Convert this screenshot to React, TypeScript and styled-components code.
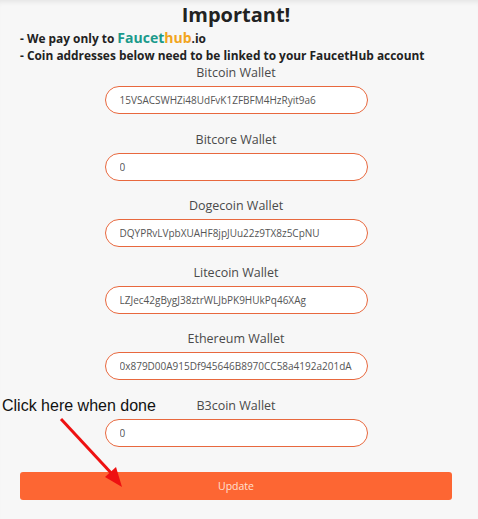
import styled, { createGlobalStyle } from 'styled-components';

const GlobalStyle = createGlobalStyle`
  html, body {
    margin: 0;
    padding: 0;
    background: #f7f7f7;
  }
  body {
    box-shadow: inset 0 5px 5px -3px rgba(0, 0, 0, 0.08);
    min-height: 519px;
  }
`;

const Page = styled.div`
  position: relative;
  padding: 3px 26px 19px 20px;
  font-family: 'Open Sans', 'Liberation Sans', sans-serif;
`;

const Title = styled.h1`
  margin: 0 0 2px;
  text-align: center;
  font-size: 20px;
  line-height: 24px;
  font-weight: 700;
  color: #222;
`;

const Note = styled.p`
  margin: 0;
  font-size: 11.9px;
  line-height: 17px;
  font-weight: 700;
  color: #222;
  white-space: nowrap;
`;

const Brand = styled.span<{ $color: string }>`
  font-size: 14px;
  color: ${(p) => p.$color};
`;

const Group = styled.div`
  display: flex;
  flex-direction: column;
  align-items: center;
  margin-bottom: 16.5px;
`;

const Label = styled.label`
  font-size: 12.5px;
  line-height: 17px;
  color: #4a4a4a;
  margin-bottom: 5px;
`;

const Field = styled.input`
  box-sizing: border-box;
  width: 263px;
  height: 28px;
  padding: 0 4px 0 14px;
  border: 1px solid #e8683e;
  border-radius: 14px;
  background: #fff;
  font-family: inherit;
  font-size: 10px;
  color: #555;
  outline: none;
`;

const Update = styled.button`
  display: block;
  width: 100%;
  height: 28px;
  margin-top: 25px;
  border: none;
  border-radius: 3px;
  background: #fd6633;
  color: #ffe0d2;
  font-family: inherit;
  font-size: 10.5px;
`;

const Callout = styled.div`
  position: absolute;
  left: 2px;
  top: 397px;
  font-family: 'Liberation Sans', Arial, sans-serif;
  font-size: 16px;
  color: #111;
`;

const Arrow = styled.svg`
  position: absolute;
  left: 55px;
  top: 413px;
  pointer-events: none;
`;

const wallets = [
  { name: 'Bitcoin Wallet', value: '15VSACSWHZi48UdFvK1ZFBFM4HzRyit9a6' },
  { name: 'Bitcore Wallet', value: '0' },
  { name: 'Dogecoin Wallet', value: 'DQYPRvLVpbXUAHF8jpJUu22z9TX8z5CpNU' },
  { name: 'Litecoin Wallet', value: 'LZJec42gBygJ38ztrWLJbPK9HUkPq46XAg' },
  { name: 'Ethereum Wallet', value: '0x879D00A915Df945646B8970CC58a4192a201dA' },
  { name: 'B3coin Wallet', value: '0' },
];

export default function App() {
  return (
    <>
      <GlobalStyle />
      <Page>
        <Title>Important!</Title>
        <Note>
          - We pay only to <Brand $color="#1b9a8b">Faucet</Brand>
          <Brand $color="#f2a51e">hub</Brand>.io
        </Note>
        <Note>- Coin addresses below need to be linked to your FaucetHub account</Note>
        {wallets.map((w) => (
          <Group key={w.name}>
            <Label>{w.name}</Label>
            <Field defaultValue={w.value} />
          </Group>
        ))}
        <Update>Update</Update>
        <Callout>Click here when done</Callout>
        <Arrow width="80" height="80" viewBox="0 0 80 80">
          <line x1="6" y1="6" x2="58" y2="62" stroke="#ee1111" strokeWidth="3" />
          <polygon points="67,74 50,64 61,54" fill="#ee1111" />
        </Arrow>
      </Page>
    </>
  );
}
